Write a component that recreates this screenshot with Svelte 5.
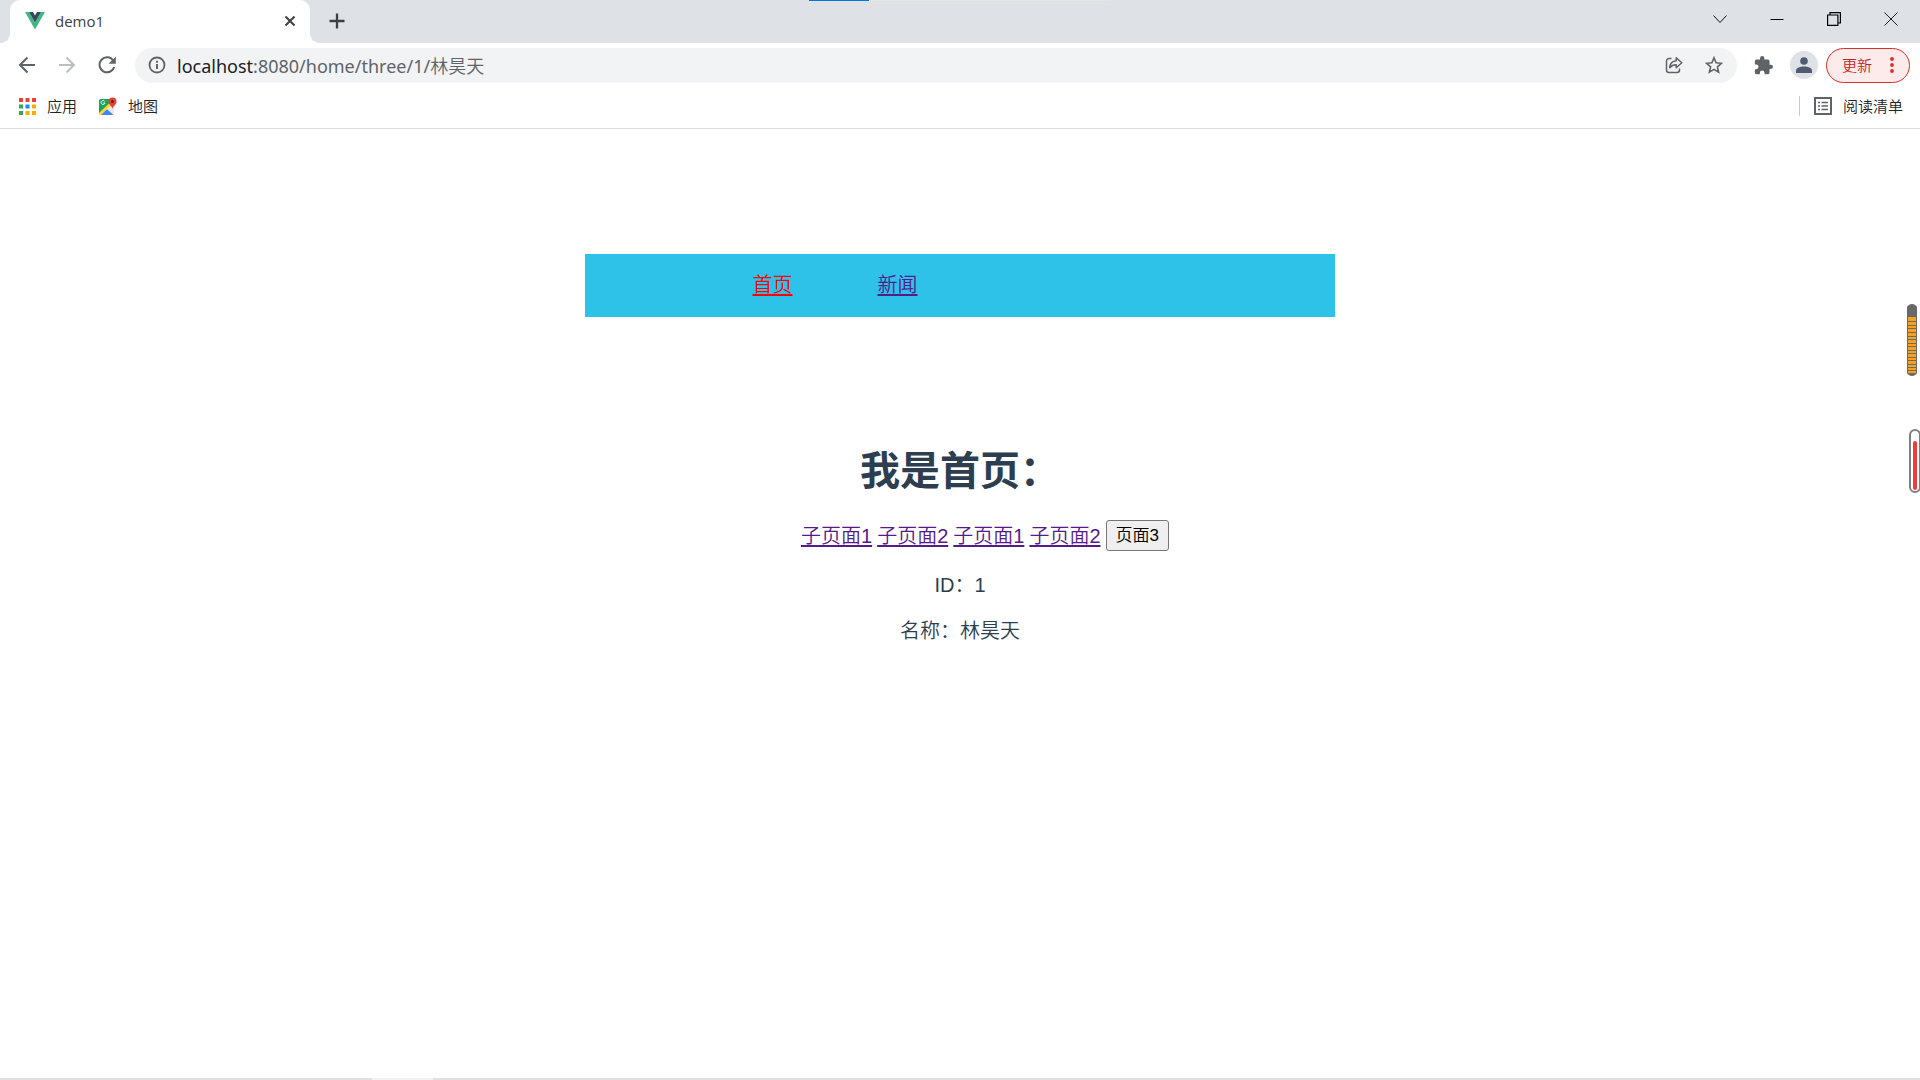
<script>
  const navLinks = [
    { label: '首页', active: true },
    { label: '新闻', active: false }
  ];
  const childLinks = ['子页面1', '子页面2', '子页面1', '子页面2'];
  const dots = ['#ea4335', '#ea4335', '#ea4335', '#34a853', '#1a8cf0', '#fbac05', '#34a853', '#fbac05', '#fbac05'];
</script>

<div class="window">
  <div class="tabs">
    <div class="tab">
      <svg class="vue" viewBox="0 0 20 18" width="20" height="18" aria-hidden="true">
        <path fill="#41b883" d="M0 0h4l6 10.5L16 0h4L10 17.5z" />
        <path fill="#35495e" d="M4 0h4l2 3.4L12 0h4l-6 10.5z" />
      </svg>
      <span class="title">demo1</span>
      <button class="icon close-tab" aria-label="关闭标签页">
        <svg viewBox="0 0 12 12" width="12" height="12"><path d="M1.5 1.5l9 9M10.5 1.5l-9 9" stroke="#3c4043" stroke-width="2" /></svg>
      </button>
    </div>
    <button class="icon add" aria-label="新标签页">
      <svg viewBox="0 0 16 16" width="16" height="16"><path d="M8 .5v15M.5 8h15" stroke="#3c4043" stroke-width="2.3" /></svg>
    </button>
    <div class="progress"><span></span></div>
    <div class="controls">
      <button class="icon" aria-label="搜索标签页"><svg viewBox="0 0 14 14" width="14" height="14" fill="none" stroke="#111"><path d="M.5 3.5L7 10.5l6.500-7" /></svg></button>
      <button class="icon" aria-label="最小化"><svg viewBox="0 0 14 14" width="14" height="14" fill="none" stroke="#000"><path d="M.5 7.500h13" /></svg></button>
      <button class="icon" aria-label="还原"><svg viewBox="0 0 14 14" width="14" height="14" fill="none" stroke="#000" stroke-width="1.2"><path d="M.6 3h10.300v10.400H.6zM3 3V.6h10.400V11H11" /></svg></button>
      <button class="icon" aria-label="关闭"><svg viewBox="0 0 14 14" width="14" height="14" fill="none" stroke="#222"><path d="M.5.5l13 13M13.500.5l-13 13" /></svg></button>
    </div>
  </div>

  <div class="toolbar">
    <button class="icon" aria-label="后退"><svg viewBox="0 0 18 18" width="18" height="18" fill="none" stroke="#5f6368" stroke-width="2"><path d="M17 9H2.500M9.500 1.500L2 9l7.500 7.500" /></svg></button>
    <button class="icon" aria-label="前进"><svg viewBox="0 0 18 18" width="18" height="18" fill="none" stroke="#bcbec1" stroke-width="2"><path d="M1 9h14.500M8.500 1.500L16 9l-7.500 7.500" /></svg></button>
    <button class="icon" aria-label="重新加载"><svg viewBox="0 0 18 18" width="18" height="18"><path d="M15.200 4.500A7.500 7.500 0 1 0 16.200 11" fill="none" stroke="#5f6368" stroke-width="2" /><path d="M17.800.5v7.300h-7.300z" fill="#5f6368" /></svg></button>
    <div class="omnibox">
      <svg viewBox="0 0 18 18" width="18" height="18" aria-hidden="true"><circle cx="9" cy="9" r="7.500" fill="none" stroke="#5f6368" stroke-width="1.800" /><path d="M9 8v5M9 4.700v2" stroke="#5f6368" stroke-width="2" /></svg>
      <div class="url"><b>localhost</b>:8080/home/three/1/<span>林昊天</span></div>
      <button class="icon" aria-label="分享"><svg viewBox="0 0 18 18" width="18" height="18" fill="none" stroke="#5f6368" stroke-width="1.500"><path d="M6.500 2.500H4A2.500 2.500 0 0 0 1.500 5v9A2.500 2.500 0 0 0 4 16.500h8a2.500 2.500 0 0 0 2.500-2.500v-1.500M11.200 1.700v3C7.500 5 5 7.500 4.700 11.700c1.600-2.100 3.600-3 6.500-3v3.100l5.600-5z" stroke-linejoin="round" /></svg></button>
      <button class="icon" aria-label="为此标签页添加书签"><svg viewBox="0 0 18 18" width="18" height="18"><path d="M9 1.800l2.100 5 5.400.5-4.100 3.600 1.200 5.300L9 13.400l-4.600 2.800 1.200-5.300-4.100-3.600 5.400-.5z" fill="none" stroke="#5f6368" stroke-width="1.600" /></svg></button>
    </div>
    <button class="icon" aria-label="扩展程序"><svg viewBox="1 1 22 22" width="19" height="19"><path fill="#5f6368" d="M20.500 11H19V7a2 2 0 0 0-2-2h-4V3.500a2.500 2.500 0 0 0-5 0V5H4a2 2 0 0 0-2 2v3.800h1.500a2.700 2.700 0 0 1 0 5.400H2V20a2 2 0 0 0 2 2h3.800v-1.500a2.700 2.700 0 0 1 5.400 0V22H17a2 2 0 0 0 2-2v-4h1.500a2.500 2.500 0 0 0 0-5z" /></svg></button>
    <button class="icon profile" aria-label="个人资料"><svg viewBox="0 0 16 16" width="16" height="16" fill="#4f5b70"><circle cx="8" cy="4" r="3.800" /><path d="M0 16v-2.500C0 10.700 4.500 9.500 8 9.500s8 1.200 8 4V16z" /></svg></button>
    <button class="update">更新<svg viewBox="0 0 4 16" width="4" height="16" fill="#d93025" aria-hidden="true"><circle cx="2" cy="2" r="1.900" /><circle cx="2" cy="8" r="1.900" /><circle cx="2" cy="14" r="1.900" /></svg></button>
  </div>

  <div class="bookmarks">
    <a href="#apps">
      <svg viewBox="0 0 17 17" width="17" height="17" aria-hidden="true">
        {#each dots as color, i}
          <rect x={(i % 3) * 6.5} y={Math.floor(i / 3) * 6.5} width="4" height="4" fill={color} />
        {/each}
      </svg>应用
    </a>
    <a href="#maps">
      <svg viewBox="0 0 19 19" width="19" height="19" aria-hidden="true">
        <path d="M1 4q0-2 2-2h13v14q0 2-2 2H3q-2 0-2-2z" fill="#e8eaed" />
        <path d="M1 4q0-2 2-2h9v5L1 17z" fill="#1fa15a" />
        <path d="M1 16L12.500 5l2 2L3 18q-2 0-2-2z" fill="#fdd835" />
        <path d="M3 18L9 12.300 15.500 18z" fill="#4285f4" />
        <path d="M6.800 4.500A2 2 0 1 0 7 6H5.200" fill="none" stroke="#fff" stroke-width=".9" />
        <path d="M14.500 12c-.3-3-4-4-4-7.500a4 4 0 0 1 8 0c0 3.500-3.700 4.500-4 7.500z" fill="#e34133" />
        <circle cx="14.500" cy="4.500" r="1.500" fill="#7b1b13" />
      </svg>地图
    </a>
    <button class="reading">
      <svg viewBox="0 0 18 18" width="18" height="18" aria-hidden="true"><path d="M1 1h16v16H1z" fill="none" stroke="#5f6368" stroke-width="2" /><path d="M4 5.500h2M7.500 5.500h6.500M4 9h2M7.500 9h6.500M4 12.500h2M7.500 12.500h6.500" stroke="#5f6368" stroke-width="1.500" /></svg>阅读清单
    </button>
  </div>

  <main>
    <nav>
      {#each navLinks as link}
        <a href="#nav" class:active={link.active}>{link.label}</a>
      {/each}
    </nav>
    <h1>我是首页：</h1>
    <div class="children">
      {#each childLinks as label}
        <a href="#child">{label}</a>
      {/each}
      <button>页面3</button>
    </div>
    <p>ID：1</p>
    <p>名称：林昊天</p>
  </main>
  <div class="edge"><span></span></div>

  <div class="widgets" aria-hidden="true">
    <svg class="battery" viewBox="0 0 12 74" width="12" height="74">
      <rect x="3" y="1" width="6" height="72" rx="2" fill="#777" />
      <rect x="1" y="2" width="10" height="70" rx="3" fill="#686868" />
      <rect x="2" y="14" width="8" height="56" fill="#fba01f" />
      <path d="M2 18.500h8M2 22.500h8M2 25.500h8M2 29.500h8M2 33.500h8M2 36.500h8M2 40.500h8M2 43.500h8M2 47.500h8M2 50.500h8M2 54.500h8M2 57.500h8M2 61.500h8M2 64.500h8M2 67.500h8" stroke="#75695a" />
    </svg>
    <svg viewBox="0 0 12 65" width="12" height="65">
      <rect x="2" y="1" width="10" height="62" rx="5" fill="#fff" stroke="#808080" stroke-width="2" />
      <rect x="5" y="12" width="4" height="49" rx="2" fill="#f03b3b" />
    </svg>
  </div>
</div>

<style>
  :global(body) { margin: 0; background: #fff; }
  * { box-sizing: border-box; }
  .window {
    position: relative;
    display: flex;
    flex-direction: column;
    min-height: 100vh;
    font-family: 'Open Sans', 'Noto Sans CJK SC', sans-serif;
    overflow: hidden;
  }
  svg { display: block; flex: none; }
  button { font-family: inherit; font-weight: inherit; cursor: pointer; }
  .icon {
    display: flex;
    align-items: center;
    justify-content: center;
    padding: 0;
    border: 0;
    background: none;
  }
  .tabs {
    position: relative;
    display: flex;
    height: 43px;
    padding-left: 10px;
    background: #dee1e6;
  }
  .tab {
    position: relative;
    display: flex;
    align-items: center;
    width: 300px;
    padding: 0 12px 1px 15px;
    background: #fff;
    border-radius: 10px 10px 0 0;
  }
  .tab::before, .tab::after {
    content: '';
    position: absolute;
    bottom: 0;
    width: 10px;
    height: 10px;
  }
  .tab::before { right: 100%; background: radial-gradient(circle at 0 0, transparent 10px, #fff 10px); }
  .tab::after { left: 100%; background: radial-gradient(circle at 100% 0, transparent 10px, #fff 10px); }
  .title { flex: 1; margin-left: 10px; font-size: 15px; line-height: 20px; color: #3c4043; }
  .close-tab { width: 16px; height: 16px; }
  .add { width: 54px; padding-bottom: 1px; }
  .progress {
    position: absolute;
    top: 0;
    left: 50%;
    width: 302px;
    height: 1px;
    margin-left: -151px;
    background: #e6e6e6;
  }
  .progress span { display: block; width: 60px; height: 1px; background: #0078d7; }
  .controls { display: flex; height: 37px; margin-left: auto; padding-right: 1px; }
  .controls .icon { width: 57px; }
  .toolbar {
    display: flex;
    align-items: center;
    height: 45px;
    padding: 0 10px 1px 7px;
  }
  .toolbar > .icon { width: 40px; height: 36px; }
  .omnibox {
    display: flex;
    flex: 1;
    align-items: center;
    height: 35px;
    margin: 0 6px 0 8px;
    padding: 0 3px 0 13px;
    border-radius: 18px;
    background: #f1f3f4;
  }
  .url {
    flex: 1;
    margin-left: 11px;
    font-family: 'Noto Sans', 'Noto Sans CJK SC', sans-serif;
    font-size: 18px;
    line-height: 24px;
    color: #5f6368;
  }
  .url b { font-weight: 400; color: #202124; }
  .url span { font-family: 'Noto Sans CJK SC', sans-serif; font-weight: 350; }
  .omnibox .icon { width: 40px; height: 35px; }
  .toolbar > .profile { width: 28px; height: 28px; margin: 0 8px 0 7px; border-radius: 50%; background: #dee1e6; }
  .update {
    display: flex;
    align-items: center;
    justify-content: space-between;
    width: 84px;
    height: 35px;
    padding: 0 15px;
    border: 1px solid #d93025;
    border-radius: 18px;
    background: #fcebea;
    font-family: 'Noto Sans CJK SC', sans-serif;
    font-size: 15px;
    font-weight: 350;
    line-height: 20px;
    color: #c5221f;
  }
  .bookmarks {
    display: flex;
    align-items: center;
    gap: 21px;
    height: 41px;
    padding: 0 17px 4px 19px;
    border-bottom: 1px solid #dadce0;
    font-family: 'Noto Sans CJK SC', sans-serif;
    font-size: 15px;
    font-weight: 350;
    line-height: 20px;
  }
  .bookmarks a { display: flex; align-items: center; gap: 11px; color: #202124; text-decoration: none; }
  .bookmarks .reading {
    display: flex;
    align-items: center;
    gap: 11px;
    margin-left: auto;
    padding: 0 0 0 14px;
    border: 0;
    border-left: 1px solid #c8cacd;
    background: none;
    font-size: 15px;
    line-height: 20px;
    color: #202124;
  }
  main {
    flex: 1;
    padding-top: 125px;
    font-family: 'Liberation Sans', 'Noto Sans CJK SC', sans-serif;
    font-size: 20px;
    font-weight: 350;
    line-height: 26px;
    text-align: center;
    color: #2c3e50;
  }
  nav {
    display: flex;
    align-items: center;
    width: 750px;
    max-width: 100%;
    height: 63px;
    margin: 0 auto 126px;
    padding: 0 0 2px 125px;
    background: #2ec2e9;
  }
  nav a { width: 125px; }
  main a { color: #551a8b; text-underline-offset: 2px; text-decoration-thickness: 2px; }
  main .active { color: #f00; }
  h1 { margin: 0 0 21px; font-size: 40px; line-height: 56px; font-weight: 700; }
  .children {
    display: flex;
    align-items: center;
    justify-content: center;
    gap: 5px;
    height: 31px;
    margin-bottom: 21px;
    padding-left: 50px;
  }
  .children button {
    height: 31px;
    padding: 0 9px;
    border: 1px solid #767676;
    border-radius: 3px;
    background: #efefef;
    font-size: 17px;
    line-height: 26px;
    color: #000;
  }
  p { margin: 0 0 20px; }
  .edge { height: 2px; padding-left: 372px; background: #e1e1e1; }
  .edge span { display: block; width: 61px; height: 2px; background: #f3f3f3; }
  .widgets {
    position: absolute;
    top: 303px;
    right: 0;
    display: flex;
    flex-direction: column;
    gap: 52px;
  }
  .battery { margin-left: -2px; }
</style>
